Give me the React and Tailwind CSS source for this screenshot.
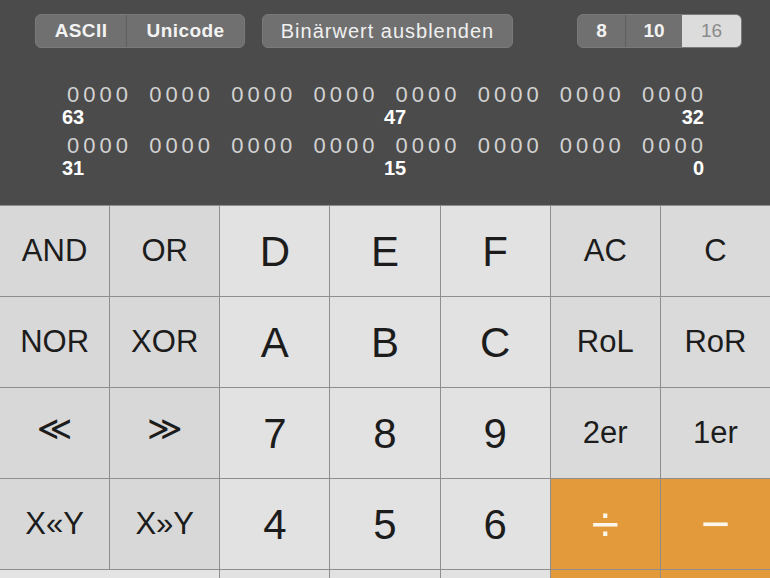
import React from 'react'

const font = { fontFamily: '"Liberation Sans", Arial, sans-serif' }

const groups = ['0000', '0000', '0000', '0000', '0000', '0000', '0000', '0000']

const BitRow = ({ left, mid, right }) => {
  return (
    <div>
      <div className="h-[22px] ml-[67px] w-[640px] flex justify-between text-[22px] leading-[22px] tracking-[4px] text-[#d2d2d2]">
        {groups.map((g, i) => (
          <span key={i}>{g}</span>
        ))}
      </div>
      <div className="h-[23px] ml-[62px] w-[642px] flex text-[20px] leading-[23px] font-bold text-white">
        <div className="flex-1">{left}</div>
        <div className="flex-1 flex justify-between pl-[2px]">
          <span>{mid}</span>
          <span>{right}</span>
        </div>
      </div>
    </div>
  )
}

const keys = [
  { label: 'AND', kind: 'op' },
  { label: 'OR', kind: 'op' },
  { label: 'D', kind: 'num' },
  { label: 'E', kind: 'num' },
  { label: 'F', kind: 'num' },
  { label: 'AC', kind: 'fn' },
  { label: 'C', kind: 'fn' },

  { label: 'NOR', kind: 'op' },
  { label: 'XOR', kind: 'op' },
  { label: 'A', kind: 'num' },
  { label: 'B', kind: 'num' },
  { label: 'C', kind: 'num' },
  { label: 'RoL', kind: 'fn' },
  { label: 'RoR', kind: 'fn' },

  { label: '≪', kind: 'op', big: true },
  { label: '≫', kind: 'op', big: true },
  { label: '7', kind: 'num' },
  { label: '8', kind: 'num' },
  { label: '9', kind: 'num' },
  { label: '2er', kind: 'fn' },
  { label: '1er', kind: 'fn' },

  { label: 'X«Y', kind: 'op' },
  { label: 'X»Y', kind: 'op' },
  { label: '4', kind: 'num' },
  { label: '5', kind: 'num' },
  { label: '6', kind: 'num' },
  { label: '÷', kind: 'orange' },
  { label: '−', kind: 'orange' },

  // bottom row, only its top edge is on screen
  { label: '', kind: 'wide' },
  { label: '', kind: 'num' },
  { label: '', kind: 'num' },
  { label: '', kind: 'num' },
  { label: '', kind: 'orange' },
  { label: '', kind: 'orange' },
]

const Key = ({ k }) => {
  let cls = 'h-[90px] flex items-center justify-center '
  if (k.kind === 'op') cls += 'bg-[#d8d8d8] text-[#1c1c1c] text-[31px]'
  if (k.kind === 'fn') cls += 'bg-[#dadada] text-[#1c1c1c] text-[31px]'
  if (k.kind === 'num') cls += 'bg-[#e2e2e2] text-[#1c1c1c] text-[42px]'
  if (k.kind === 'wide') cls += 'bg-[#e4e4e4] col-span-2'
  if (k.kind === 'orange') cls += 'bg-[#e39a3a] text-[#fdf6ea] text-[50px]'
  return (
    <div className={cls}>
      {k.big ? (
        <span className="text-[34px] pb-[10px]" style={{ fontFamily: '"DejaVu Sans", sans-serif' }}>
          {k.label}
        </span>
      ) : (
        k.label
      )}
    </div>
  )
}

export default function App() {
  return (
    <div className="w-[770px] h-[578px] overflow-hidden bg-[#4b4b4b]" style={font}>
      <div className="h-[205px] bg-[#4b4b4b] pt-[14px]">
        <div className="flex items-center h-[34px] pl-[35px]">
          <div className="flex h-full rounded-[6px] bg-[#707070] border border-[#7a7a7a] overflow-hidden text-[19px] font-bold tracking-[0.4px] text-[#f3f3f3]">
            <div className="w-[91px] flex items-center justify-center border-r border-[#5f5f5f]">ASCII</div>
            <div className="w-[117px] flex items-center justify-center">Unicode</div>
          </div>
          <div className="ml-[17px] w-[251px] h-full rounded-[6px] bg-[#707070] border border-[#7a7a7a] flex items-center justify-center text-[20px] font-medium tracking-[1px] text-[#f0f0f0]">
            Binärwert ausblenden
          </div>
          <div className="ml-[64px] flex h-full w-[165px] rounded-[6px] bg-[#707070] border border-[#7a7a7a] overflow-hidden text-[19px] font-bold text-[#f3f3f3]">
            <div className="w-[48px] flex items-center justify-center border-r border-[#5f5f5f]">8</div>
            <div className="w-[56px] flex items-center justify-center">10</div>
            <div className="flex-1 flex items-center justify-center bg-[#dcdcdc] text-[#8a8a8a] font-normal">16</div>
          </div>
        </div>
        <div className="mt-[36px]">
          <BitRow left="63" mid="47" right="32" />
        </div>
        <div className="mt-[6px]">
          <BitRow left="31" mid="15" right="0" />
        </div>
      </div>
      <div className="grid grid-cols-7 gap-px bg-[#8e8e8e] pt-px">
        {keys.map((k, i) => (
          <Key key={i} k={k} />
        ))}
      </div>
    </div>
  )
}
